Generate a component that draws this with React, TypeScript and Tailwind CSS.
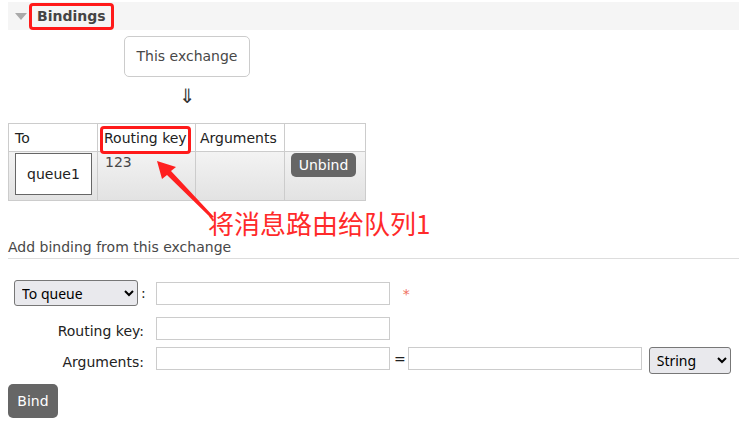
export default function App() {
  return (
    <div className="relative min-h-[425px] w-[739px] bg-white text-[14px] text-[#484848]" style={{ fontFamily: '"DejaVu Sans", Verdana, sans-serif' }}>
      <div className="ml-2 mt-[2px] flex h-[28px] items-center bg-[#f5f5f5]">
        <span className="ml-[7px] h-0 w-0 border-x-[6px] border-t-[7px] border-x-transparent border-t-[#aaa]" />
        <div className="ml-[2px] flex h-[27px] items-center rounded-[4px] border-[3px] border-[#ff1a1a] px-[5px] text-[14px] font-bold text-[#444]">
          Bindings
        </div>
      </div>

      <div className="ml-[124px] mt-[6px] flex h-[41px] w-[126px] items-center justify-center rounded-[5px] border border-[#ccc]">
        This exchange
      </div>
      <div className="ml-[179px] mt-[9px] h-[20px] text-[20px] leading-[20px] text-[#333]">⇓</div>

      <table className="ml-2 mt-[17px] w-[357px] table-fixed border-collapse">
        <colgroup>
          <col className="w-[89px]" />
          <col className="w-[98px]" />
          <col className="w-[89px]" />
          <col className="w-[81px]" />
        </colgroup>
        <thead>
          <tr className="h-[28px] bg-white text-left text-[#222]">
            <th className="border border-[#ccc] px-[6px] pt-[2px] font-normal">To</th>
            <th className="border border-[#ccc] px-[6px] pt-[2px] font-normal">Routing key</th>
            <th className="border border-[#ccc] px-[4px] pt-[2px] font-normal">Arguments</th>
            <th className="border border-[#ccc] font-normal" />
          </tr>
        </thead>
        <tbody>
          <tr className="h-[49px] bg-gradient-to-b from-[#f3f3f3] to-[#e2e2e2] align-top">
            <td className="border border-[#ccc] px-[6px] pt-[1px]">
              <div className="flex h-[42px] w-[77px] items-center justify-center border border-[#666] bg-white text-[#222]">queue1</div>
            </td>
            <td className="border border-[#ccc] px-[7px] pt-[1px] leading-[18px]">123</td>
            <td className="border border-[#ccc]" />
            <td className="border border-[#ccc] px-[6px] pt-[1px]">
              <button className="h-[24px] w-[65px] rounded-[5px] bg-[#666] text-white">Unbind</button>
            </td>
          </tr>
        </tbody>
      </table>

      <div className="ml-2 mt-[36px] border-b border-[#ddd]">Add binding from this exchange</div>

      <div className="ml-[14px] mt-[21px] flex h-[26px] items-center text-[#222]">
        <select className="h-[26px] w-[124px] rounded-[3px] border border-[#777] bg-[#e9e9ed] px-[3px] text-[14px] text-black" style={{ fontFamily: '"Noto Sans", sans-serif' }} defaultValue="q">
          <option value="q">To queue</option>
        </select>
        <span className="ml-[3px]">:</span>
        <input className="ml-[10px] h-[23px] w-[234px] border border-[#ccc]" />
        <span className="ml-[13px] mt-[2px] text-[#f07060]">*</span>
      </div>

      <div className="mt-[11px] flex h-[23px] items-start text-[#222]">
        <label className="w-[144px] pt-[6px] text-right leading-[17px]">Routing key:</label>
        <input className="ml-[12px] h-[23px] w-[234px] border border-[#ccc]" />
      </div>

      <div className="mt-[7px] flex h-[27px] items-start text-[#222]">
        <label className="w-[144px] pt-[7px] text-right leading-[17px]">Arguments:</label>
        <input className="ml-[12px] h-[23px] w-[234px] border border-[#ccc]" />
        <span className="ml-[4px] pt-[2px]">=</span>
        <input className="ml-[2px] h-[23px] w-[234px] border border-[#ccc]" />
        <select className="ml-[7px] h-[27px] w-[82px] rounded-[3px] border border-[#777] bg-[#e9e9ed] px-[3px] text-[14px] text-black" style={{ fontFamily: '"Noto Sans", sans-serif' }} defaultValue="s">
          <option value="s">String</option>
        </select>
      </div>

      <button className="ml-2 mt-[10px] h-[34px] w-[50px] rounded-[5px] bg-[#666] text-white">Bind</button>

      <svg className="pointer-events-none absolute left-0 top-0" width="739" height="425">
        <polygon points="157,159 176,165 171,169 214,215 211,216 167,173 162,177" fill="#ff2020" />
      </svg>
      <div className="pointer-events-none absolute left-[100px] top-[124px] h-[28px] w-[91px] rounded-[4px] border-[3px] border-[#ff1a1a]" />
      <div className="absolute left-[208px] top-[201px] text-[26px] text-[#ff2a2a]" style={{ fontFamily: '"Noto Sans CJK SC", sans-serif' }}>将消息路由给队列1</div>
    </div>
  );
}
